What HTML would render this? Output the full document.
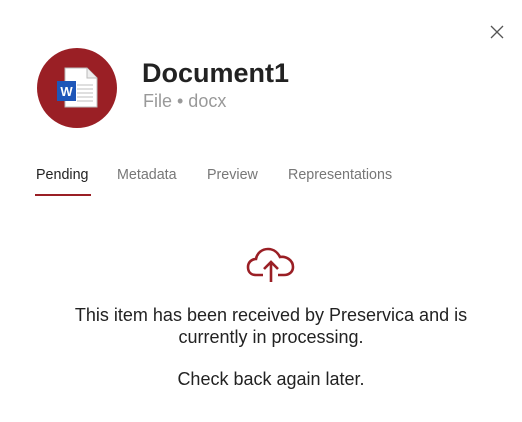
<!DOCTYPE html>
<html><head><style>
body{margin:0;width:522px;height:422px;background:#fff;font-family:"Liberation Sans",sans-serif;position:relative;overflow:hidden}
.a{position:absolute}
</style></head><body>
<svg class="a" style="left:490px;top:25px" width="14" height="14" viewBox="0 0 14 14"><path d="M1 1L13 13M13 1L1 13" stroke="#555" stroke-width="1.3"/></svg>
<div class="a" style="left:37px;top:48px;width:80px;height:80px;border-radius:50%;background:#9a1f25"></div>
<svg class="a" style="left:55px;top:66px" width="46" height="44" viewBox="0 0 46 44">
<path d="M10 2H32L42 12V41H10Z" fill="#fff" stroke="#bbb" stroke-width="1"/>
<path d="M32 2V12H42" fill="#eee" stroke="#bbb" stroke-width="1"/>
<g stroke="#ccc" stroke-width="1.2"><path d="M22 19H38M22 23H38M22 27H38M22 31H38M22 35H38"/></g>
<rect x="2" y="15" width="19" height="20" fill="#1e56b8"/>
<text x="11.5" y="30" font-family="Liberation Sans" font-weight="bold" font-size="13" fill="#fff" text-anchor="middle">W</text>
</svg>
<div class="a" style="left:142px;top:58px;font-size:27px;font-weight:bold;color:#222">Document1</div>
<div class="a" style="left:143px;top:91px;font-size:18px;color:#999">File • docx</div>
<div class="a" style="left:36px;top:167px;font-size:14.3px;color:#222">Pending</div>
<div class="a" style="left:117px;top:167px;font-size:14.3px;color:#777">Metadata</div>
<div class="a" style="left:207px;top:167px;font-size:14.3px;color:#777">Preview</div>
<div class="a" style="left:288px;top:167px;font-size:14.3px;color:#777">Representations</div>
<div class="a" style="left:35px;top:194px;width:56px;height:2px;background:#9a1f25"></div>
<svg class="a" style="left:246px;top:246px" width="50" height="38" viewBox="0 0 50 38">
<path d="M17 29H10C5 29 2 26 2 21C2 16 6 13 10 13C11 7 16 3 22 3C28 3 32 7 34 11C40 10 47 14 47 21C47 26 43 29 38 29H32" fill="none" stroke="#9a1f25" stroke-width="2.6"/>
<path d="M25 36V17M18 23L25 16L32 23" fill="none" stroke="#9a1f25" stroke-width="2.6"/>
</svg>
<div class="a" style="left:0;width:542px;top:304px;text-align:center;font-size:18px;line-height:22px;color:#222">This item has been received by Preservica and is<br>currently in processing.</div>
<div class="a" style="left:0;width:542px;top:368px;text-align:center;font-size:18px;line-height:22px;color:#222">Check back again later.</div>
</body></html>
